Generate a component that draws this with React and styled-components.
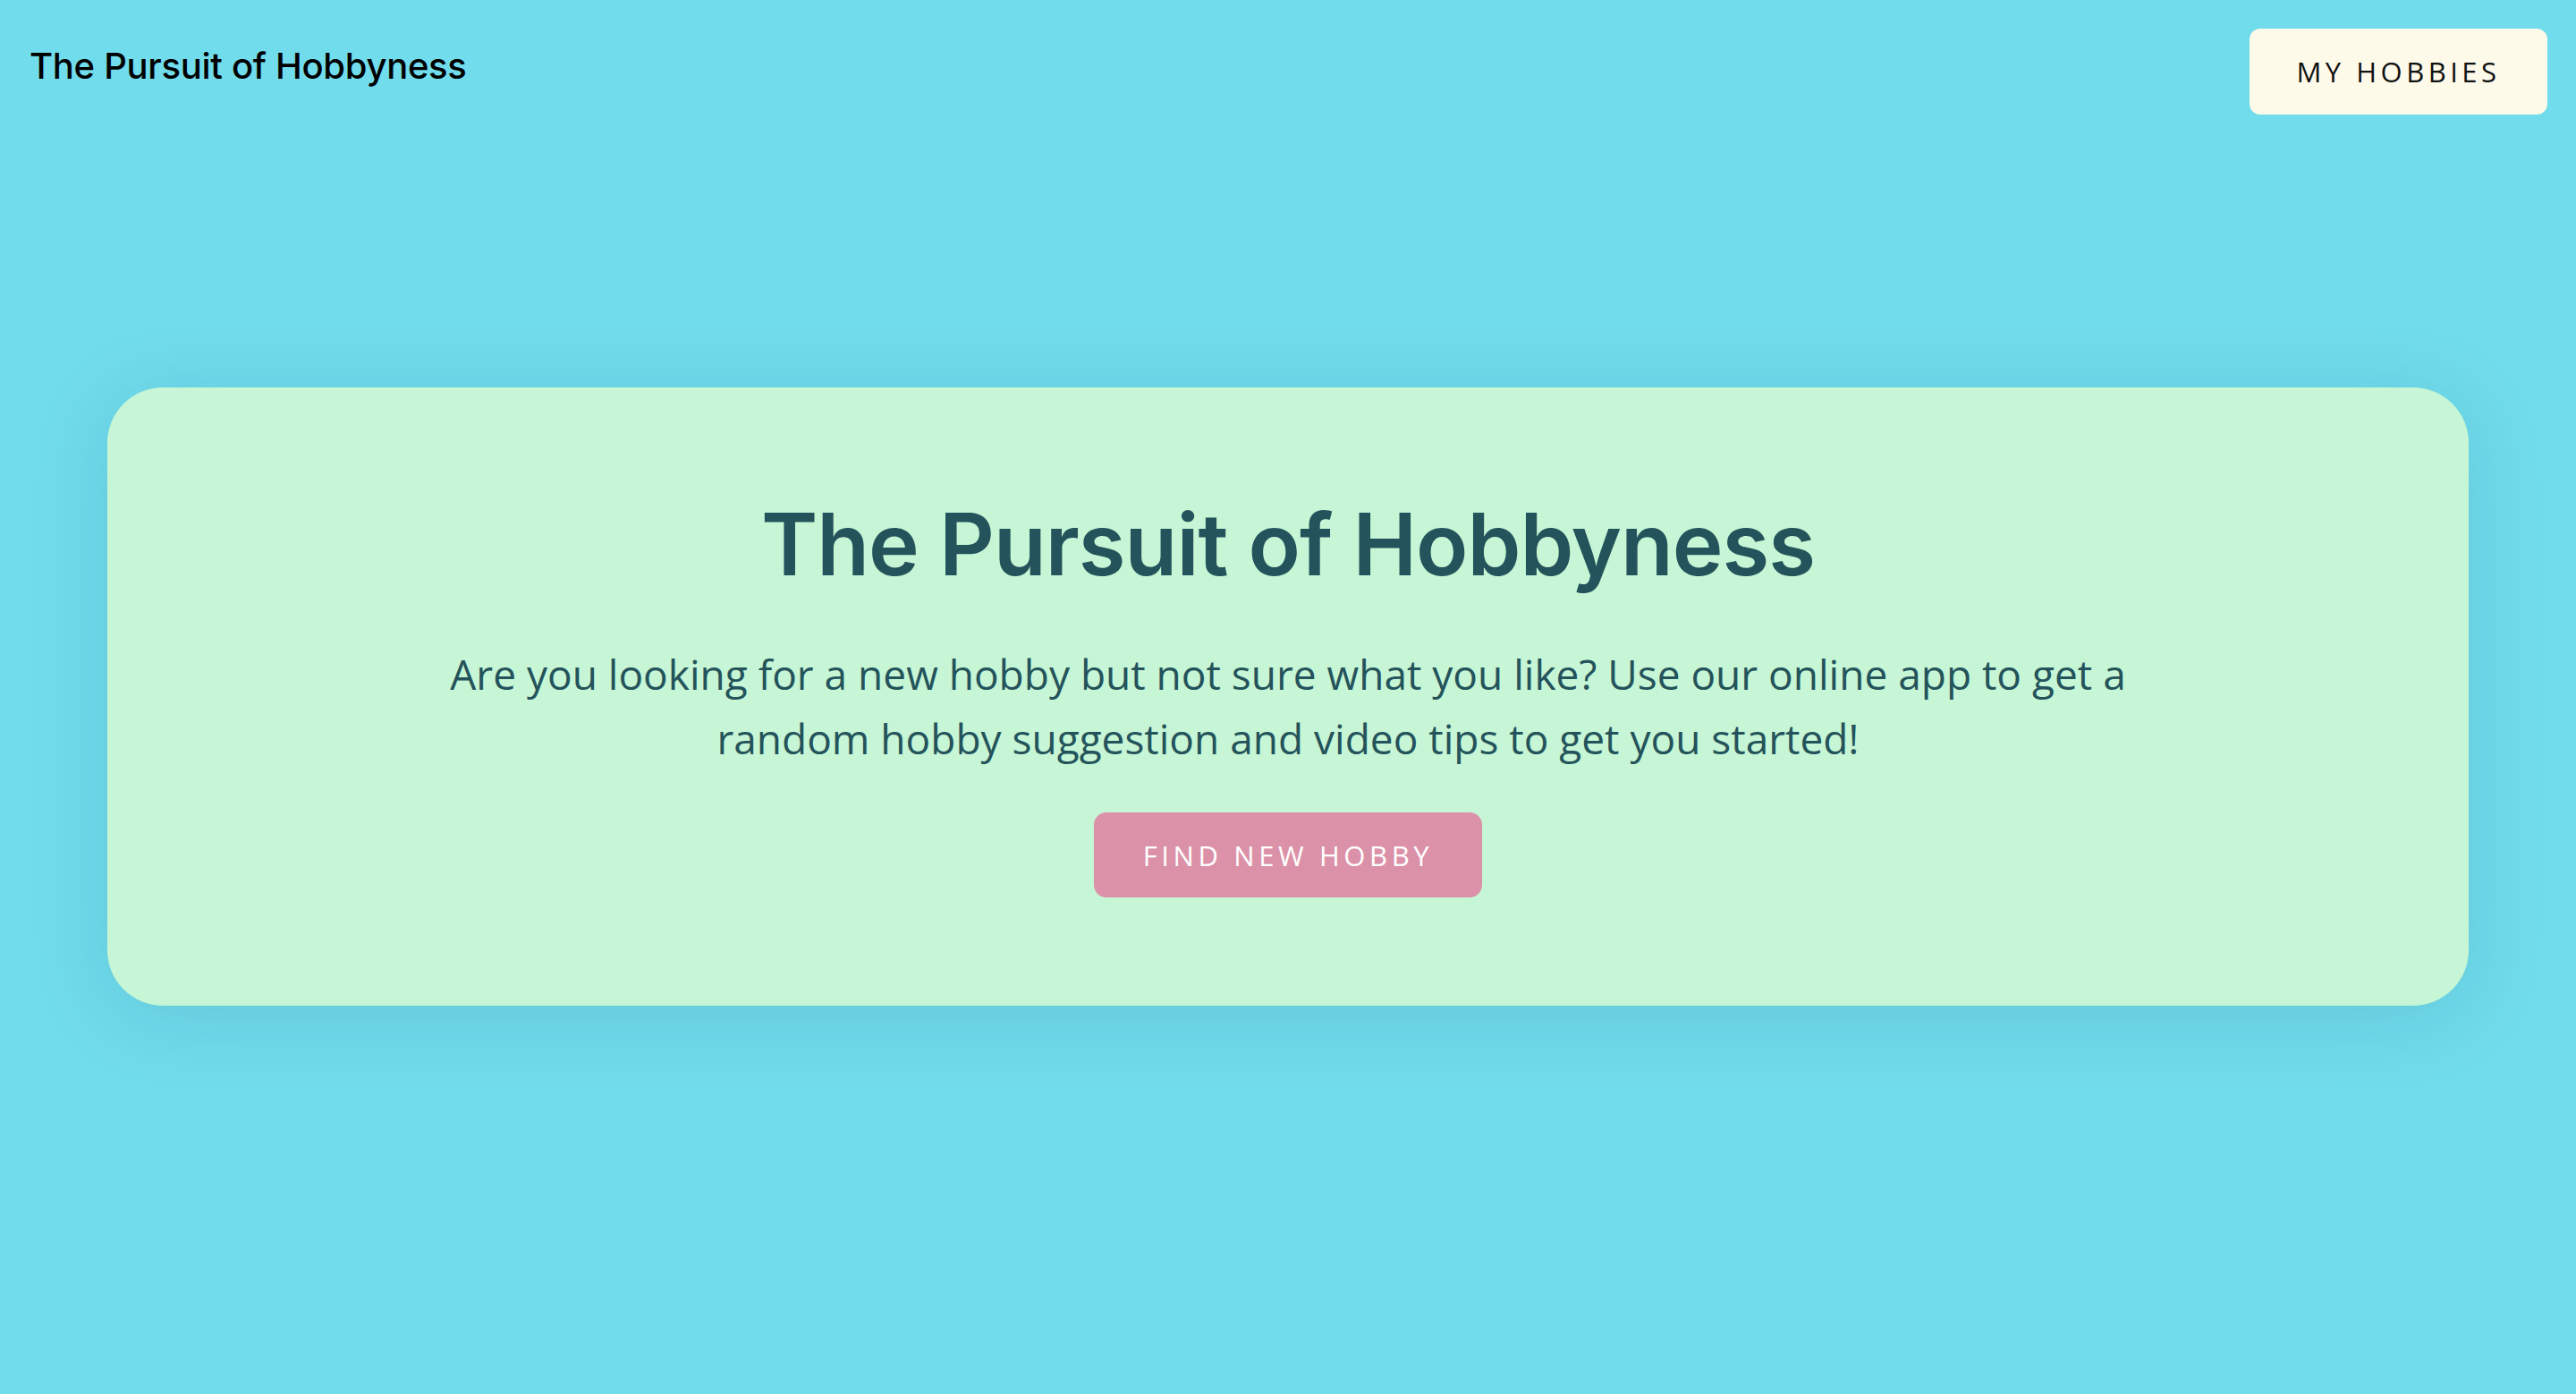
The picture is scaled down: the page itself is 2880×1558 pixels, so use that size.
import React from "react";
import styled, { createGlobalStyle } from "styled-components";

const Global = createGlobalStyle`
  html, body { margin: 0; padding: 0; }
  body {
    background: #71dcec;
    min-height: 1558px;
    font-family: "Open Sans", "Lato", sans-serif;
  }
`;

const Page = styled.div`
  min-height: 1558px;
  background: #71dcec;
  display: flex;
  flex-direction: column;
`;

const Header = styled.header`
  display: flex;
  justify-content: space-between;
  align-items: flex-start;
  padding: 32px 32px 0 33px;
  height: 96px;
`;

const Brand = styled.div`
  font-family: "Inter", sans-serif;
  font-size: 40px;
  font-weight: 500;
  color: #000;
  letter-spacing: -0.3px;
  margin-top: 22px;
  line-height: 1;
`;

const NavButton = styled.button`
  width: 333px;
  height: 96px;
  border: none;
  border-radius: 12px;
  background: #fefae9;
  color: #111;
  font-family: "Open Sans", sans-serif;
  font-size: 31px;
  letter-spacing: 4.5px;
  font-weight: 400;
  cursor: pointer;
`;

const Main = styled.main`
  padding: 305px 120px 0 120px;
`;

const Card = styled.section`
  background: #c6f6d5;
  border-radius: 62px;
  height: 691px;
  box-sizing: border-box;
  box-shadow: 0 12px 90px rgba(20, 90, 120, 0.16);
  display: flex;
  flex-direction: column;
  align-items: center;
  padding-top: 118px;
`;

const Title = styled.h1`
  margin: 0;
  font-family: "Inter", sans-serif;
  font-weight: 600;
  font-size: 96px;
  line-height: 1.2;
  letter-spacing: -1px;
  color: #24535b;
`;

const Lead = styled.p`
  margin: 51px 0 0;
  max-width: 2100px;
  text-align: center;
  font-family: "Open Sans", sans-serif;
  font-size: 46px;
  line-height: 72px;
  color: #24535b;
`;

const CtaButton = styled.button`
  margin-top: 47px;
  width: 434px;
  height: 95px;
  border: none;
  border-radius: 14px;
  background: #db92a8;
  color: #fff;
  font-family: "Open Sans", sans-serif;
  font-size: 31px;
  letter-spacing: 4.6px;
  cursor: pointer;
`;

export default function App() {
  return (
    <>
      <Global />
      <Page>
        <Header>
          <Brand>The Pursuit of Hobbyness</Brand>
          <NavButton>MY HOBBIES</NavButton>
        </Header>
        <Main>
          <Card>
            <Title>The Pursuit of Hobbyness</Title>
            <Lead>
              Are you looking for a new hobby but not sure what you like? Use our online app to get a
              <br />
              random hobby suggestion and video tips to get you started!
            </Lead>
            <CtaButton>FIND NEW HOBBY</CtaButton>
          </Card>
        </Main>
      </Page>
    </>
  );
}
